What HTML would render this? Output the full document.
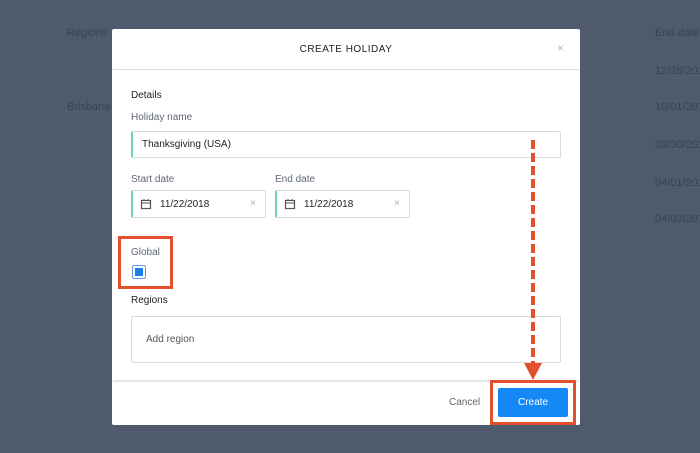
<!DOCTYPE html><html><head><style>
*{box-sizing:border-box;margin:0;padding:0}
body{width:700px;height:453px;background:#4f5a6c;font-family:"Liberation Sans",sans-serif;position:relative;overflow:hidden}
.a{position:absolute}
.bg{color:#3a4356;font-size:11px}
.m{left:112px;top:29px;width:468px;height:396px;background:#fff;border-radius:2px}
.lbl{font-size:10px;color:#5f6775}
.in{background:#fff;border:1px solid #d7dbe0;border-left:2px solid #6fd4b4;border-radius:2px;font-size:10px;color:#222}
</style></head><body>
<div class="a bg" style="left:67px;top:27px">Regions</div>
<div class="a bg" style="left:67px;top:101px">Brisbane</div>
<div class="a bg" style="left:655px;top:27px">End date</div>
<div class="a bg" style="left:655px;top:65px">12/26/2017</div>
<div class="a bg" style="left:655px;top:101px">10/01/2017</div>
<div class="a bg" style="left:655px;top:139px">03/30/2017</div>
<div class="a bg" style="left:655px;top:177px">04/01/2018</div>
<div class="a bg" style="left:655px;top:213px">04/02/2017</div>
<div class="a m"></div>
<div class="a" style="left:112px;top:44px;width:468px;text-align:center;font-size:10px;letter-spacing:.5px;color:#222">CREATE HOLIDAY</div>
<div class="a" style="left:557px;top:41px;font-size:12px;color:#bbb">×</div>
<div class="a" style="left:113px;top:69px;width:466px;border-top:1px solid #d8dce2"></div>
<div class="a" style="left:131px;top:90px;font-size:10px;color:#222">Details</div>
<div class="a lbl" style="left:131px;top:112px">Holiday name</div>
<div class="a in" style="left:131px;top:131px;width:430px;height:27px;padding:7px 9px">Thanksgiving (USA)</div>
<div class="a lbl" style="left:131px;top:174px">Start date</div>
<div class="a lbl" style="left:275px;top:174px">End date</div>
<div class="a in" style="left:131px;top:190px;width:135px;height:28px;padding:8px 0 0 27px">11/22/2018<span style="position:absolute;left:117px;top:7px;color:#aaa">×</span></div>
<div class="a in" style="left:275px;top:190px;width:135px;height:28px;padding:8px 0 0 27px">11/22/2018<span style="position:absolute;left:117px;top:7px;color:#aaa">×</span></div>
<svg class="a" style="left:140px;top:198px" width="12" height="12"><rect x="1.5" y="2.5" width="9" height="8" fill="none" stroke="#555" stroke-width="1.2"/><line x1="1.5" y1="5" x2="10.5" y2="5" stroke="#555"/><line x1="4" y1="1" x2="4" y2="3" stroke="#555"/><line x1="8" y1="1" x2="8" y2="3" stroke="#555"/></svg>
<svg class="a" style="left:284px;top:198px" width="12" height="12"><rect x="1.5" y="2.5" width="9" height="8" fill="none" stroke="#555" stroke-width="1.2"/><line x1="1.5" y1="5" x2="10.5" y2="5" stroke="#555"/><line x1="4" y1="1" x2="4" y2="3" stroke="#555"/><line x1="8" y1="1" x2="8" y2="3" stroke="#555"/></svg>
<div class="a lbl" style="left:131px;top:247px">Global</div>
<div class="a" style="left:132px;top:265px;width:14px;height:14px;border:1px solid #5b9be8;border-radius:2px;background:#fff;padding:2px"><div style="width:8px;height:8px;background:#1a7fe8"></div></div>
<div class="a" style="left:118px;top:236px;width:55px;height:53px;border:3px solid #e4502e"></div>
<div class="a" style="left:131px;top:295px;font-size:10px;color:#222">Regions</div>
<div class="a" style="left:131px;top:316px;width:430px;height:47px;border:1px solid #d7dbe0;border-radius:2px;font-size:10px;color:#555;padding:17px 14px">Add region</div>
<div class="a" style="left:113px;top:380px;width:466px;border-top:2px solid #e3e5e9"></div>
<div class="a" style="left:449px;top:397px;font-size:10px;color:#666">Cancel</div>
<div class="a" style="left:498px;top:388px;width:70px;height:29px;background:#1489f5;border-radius:2px;color:#fff;font-size:10px;text-align:center;line-height:29px">Create</div>
<div class="a" style="left:490px;top:380px;width:86px;height:45px;border:3px solid #e4502e"></div>
<div class="a" style="left:531px;top:140px;width:4px;height:228px;background:repeating-linear-gradient(#e4502e 0 9px,transparent 9px 13px)"></div>
<svg class="a" style="left:524px;top:363px" width="18" height="17"><polygon points="0,0 18,0 9,17" fill="#e4502e"/></svg>
</body></html>
